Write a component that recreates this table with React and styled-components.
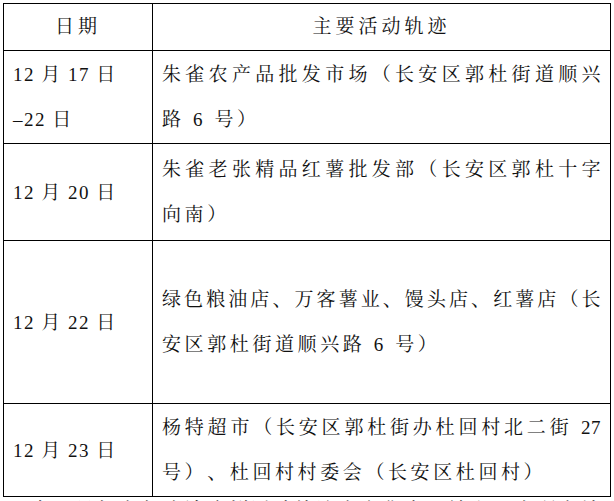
import React from "react";
import styled, { createGlobalStyle } from "styled-components";

const GlobalStyle = createGlobalStyle`
  html, body {
    margin: 0;
    padding: 0;
    background: #fff;
    overflow: hidden;
  }
  body {
    font-family: "Liberation Serif", "Noto Serif CJK SC", "Noto Sans CJK SC", serif;
    color: #111;
    text-spacing-trim: space-all;
  }
`;

const rows = [
  {
    h: 93,
    date: ["12 月 17 日", "–22 日"],
    lines: ["朱雀农产品批发市场（长安区郭杜街道顺兴", "路 6 号）"],
  },
  {
    h: 97,
    date: ["12 月 20 日"],
    lines: ["朱雀老张精品红薯批发部（长安区郭杜十字", "向南）"],
  },
  {
    h: 163,
    date: ["12 月 22 日"],
    lines: ["绿色粮油店、万客薯业、馒头店、红薯店（长", "安区郭杜街道顺兴路 6 号）"],
  },
  {
    h: 93,
    date: ["12 月 23 日"],
    lines: ["杨特超市（长安区郭杜街办杜回村北二街 27", "号）、杜回村村委会（长安区杜回村）"],
  },
];

export default function App() {
  return (
    <>
      <GlobalStyle />
      <Page>
        <Table>
          <colgroup>
            <col style={{ width: 149 }} />
            <col />
          </colgroup>
          <thead>
            <Row $h={47}>
              <HeadCell>日期</HeadCell>
              <HeadCell>主要活动轨迹</HeadCell>
            </Row>
          </thead>
          <tbody>
            {rows.map((r, i) => (
              <Row key={i} $h={r.h}>
                <DateCell>
                  {r.date.map((d, j) => (
                    <Line key={j}>{d}</Line>
                  ))}
                </DateCell>
                <TrackCell>
                  {r.lines.map((l, j) => (
                    <Line key={j} $justify={j < r.lines.length - 1}>
                      {l}
                    </Line>
                  ))}
                </TrackCell>
              </Row>
            ))}
          </tbody>
        </Table>
        <Note>以上人员如有与确诊病例活动轨迹有交集者，请立即向所在社区报告。</Note>
      </Page>
    </>
  );
}

const Page = styled.div`
  padding: 3px 0 0 3px;
  width: 608px;
`;

const Table = styled.table`
  width: 608px;
  border-collapse: collapse;
  table-layout: fixed;
  font-size: 19px;
`;

const Row = styled.tr`
  height: ${(p) => p.$h}px;
`;

const Cell = styled.td`
  border: 1px solid #000;
  vertical-align: middle;
  padding: 0;
`;

const HeadCell = styled(Cell).attrs({ as: "th" })`
  font-weight: normal;
  text-align: center;
  letter-spacing: 4px;
  line-height: 26px;
`;

const DateCell = styled(Cell)`
  padding-left: 9px;
  text-align: left;
  letter-spacing: 1.5px;
`;

const TrackCell = styled(Cell)`
  padding: 0 9px 0 9px;
  letter-spacing: 3.6px;
`;

const Line = styled.div`
  line-height: 45px;
  white-space: nowrap;
  letter-spacing: ${(p) => (p.$justify ? "0.5px" : "inherit")};
  text-align: ${(p) => (p.$justify ? "justify" : "left")};
  text-align-last: ${(p) => (p.$justify ? "justify" : "auto")};
`;

const Note = styled.p`
  margin: 4px 0 0 6px;
  font-size: 19px;
  letter-spacing: 3px;
  line-height: 19px;
`;
